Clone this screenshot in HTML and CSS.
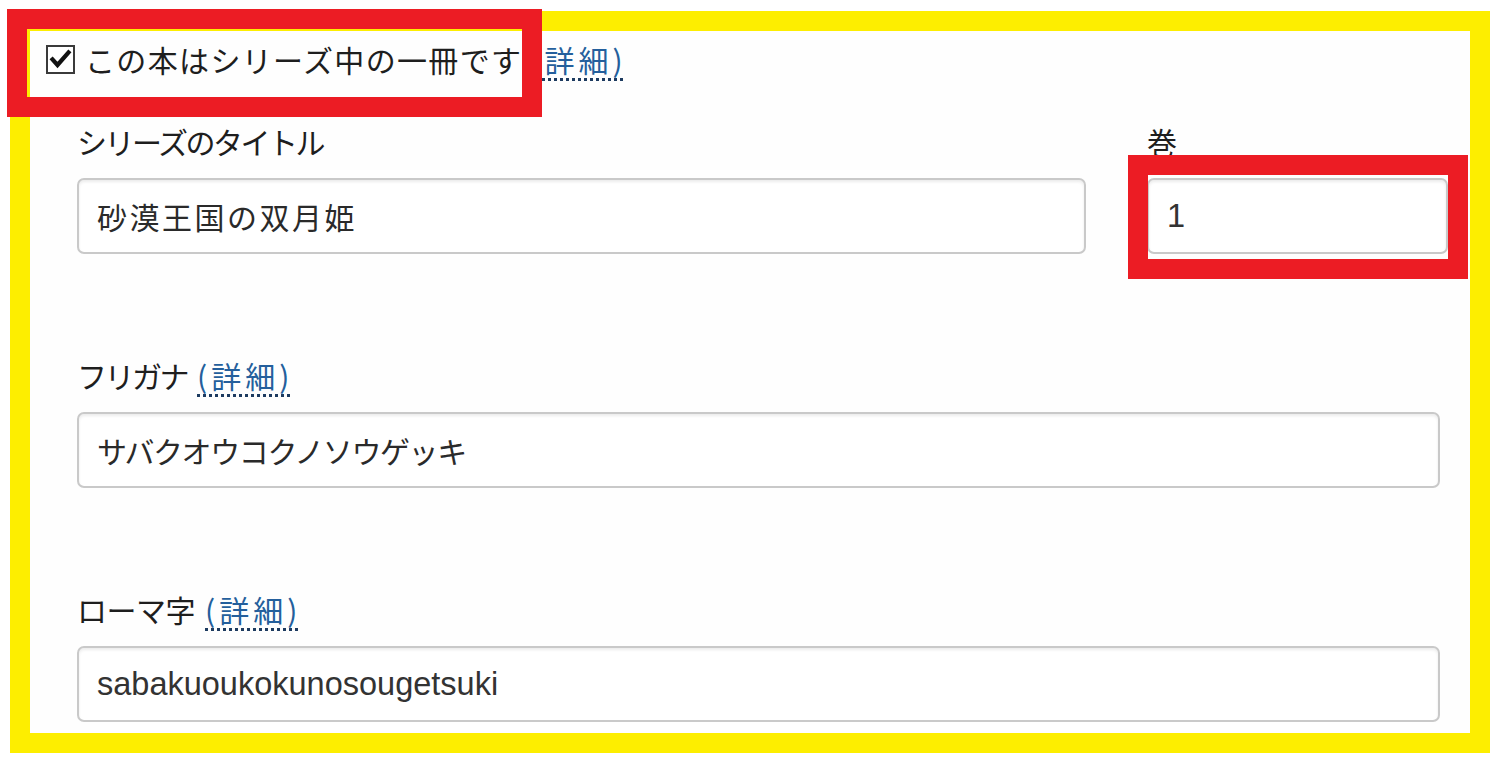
FILE: index.html
```html
<!DOCTYPE html>
<html lang="ja">
<head>
<meta charset="utf-8">
<title>シリーズ</title>
<link rel="stylesheet" href="styles.css">
</head>
<body>
<div class="stage">
  <form class="frame">
    <div class="check-row">
      <span class="checkbox">
        <svg width="29" height="29" viewBox="0 0 29 29">
          <rect x="1" y="1" width="27" height="27" fill="#fff" stroke="#3a3a3a" stroke-width="2"/>
          <polyline points="6.5,14.5 11.5,20 22.5,7.5" fill="none" stroke="#111" stroke-width="4.2" stroke-linecap="square"/>
        </svg>
      </span>
      <span class="check-label">この本はシリーズ中の一冊です</span>
      <a class="detail detail-check">(詳細)</a>
    </div>
    <div class="fields">
      <div class="row-split">
        <div class="group">
          <label class="field-label lbl-series">シリーズのタイトル</label>
          <input class="field kanji" type="text" value="砂漠王国の双月姫">
        </div>
        <div class="group">
          <label class="field-label">巻</label>
          <input class="field latin" type="text" value="1">
        </div>
      </div>
      <div class="group">
        <div class="field-label"><span class="lbl-kana">フリガナ</span><a class="detail">(詳細)</a></div>
        <input class="field kana" type="text" value="サバクオウコクノソウゲッキ">
      </div>
      <div class="group">
        <div class="field-label"><span class="lbl-roma">ローマ字</span><a class="detail">(詳細)</a></div>
        <input class="field latin" type="text" value="sabakuoukokunosougetsuki">
      </div>
    </div>
  </form>
  <div class="mark mark-check"></div>
  <div class="mark mark-volume"></div>
</div>
</body>
</html>
```
FILE: styles.css
```css
html, body {
  margin: 0;
  padding: 0;
  background: #ffffff;
}

body {
  font-family: "Noto Sans CJK JP", "Liberation Sans", sans-serif;
  font-size: 30px;
  color: #1e1e1e;
}

.stage {
  position: relative;
  width: 1500px;
  height: 764px;
  overflow: hidden;
}

.frame {
  box-sizing: border-box;
  width: 1480px;
  height: 742px;
  margin: 11px 0 0 10px;
  border: 20px solid #fdee00;
  padding: 8px 30px 0 16px;
  background: #fefefe;
}

.check-row {
  display: flex;
  align-items: center;
  height: 40px;
  line-height: 40px;
}

.checkbox {
  display: flex;
  width: 29px;
  height: 29px;
  margin-right: 10px;
}

.check-label {
  letter-spacing: 1.35px;
}

.detail {
  color: #245f9c;
  letter-spacing: 4px;
  margin-left: 10px;
  text-decoration: underline dotted #1d3b60;
  text-decoration-thickness: 3px;
  text-underline-offset: 6px;
  cursor: pointer;
}

.detail-check {
  margin-left: 8px;
}

.fields {
  margin: 42px 0 0 31px;
  display: flex;
  flex-direction: column;
  gap: 101px;
}

.row-split {
  display: grid;
  grid-template-columns: 1009px 301px;
  column-gap: 61px;
}

.group {
  display: flex;
  flex-direction: column;
}

.field-label {
  display: block;
  height: 40px;
  line-height: 40px;
  margin-bottom: 17px;
  white-space: nowrap;
}

.lbl-series { letter-spacing: -2.5px; }
.lbl-kana { letter-spacing: -2.5px; }
.lbl-roma { letter-spacing: -0.5px; }

.field {
  box-sizing: border-box;
  width: 100%;
  height: 76px;
  margin: 0;
  padding: 0 18px;
  border: 2px solid #c9c9c9;
  border-radius: 7px;
  box-shadow: inset 0 2px 3px rgba(0, 0, 0, 0.08);
  background: #ffffff;
  font-family: "Noto Sans CJK JP", "Liberation Sans", sans-serif;
  font-size: 30px;
  color: #2a2a2a;
  outline: none;
}

.kanji { letter-spacing: 2.5px; }
.kana { letter-spacing: -1.4px; }

.latin {
  font-family: "Liberation Sans", Arial, sans-serif;
  font-size: 32.5px;
  color: #333333;
}

.mark {
  position: absolute;
  box-sizing: border-box;
  border: 20px solid #ec1c24;
  pointer-events: none;
}

.mark-check {
  left: 7px;
  top: 9px;
  width: 535px;
  height: 108px;
}

.mark-volume {
  left: 1128px;
  top: 155px;
  width: 340px;
  height: 124px;
}
```
